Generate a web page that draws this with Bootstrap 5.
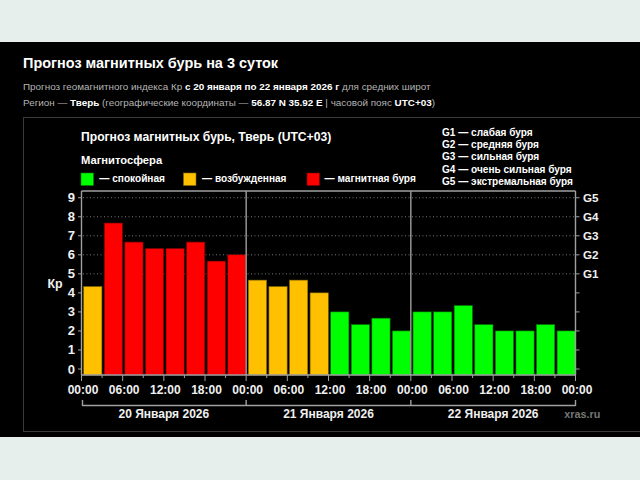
<!DOCTYPE html>
<html lang="ru">
<head>
<meta charset="utf-8">
<title>Прогноз магнитных бурь</title>
<link href="https://cdn.jsdelivr.net/npm/bootstrap@5.3.0/dist/css/bootstrap.min.css" rel="stylesheet">
<style>
html,body{height:480px;overflow:hidden}
body{background:#e6efeb;font-family:"Liberation Sans",Arial,sans-serif;padding-top:42px}
.storm-panel{background:#000;height:395px;padding:11px 0 6px 23px;color:#fff}
.storm-title{font-size:14.45px;line-height:20px;font-weight:700;margin:0 0 6px}
.storm-text{font-size:9.9px;line-height:16px;margin:0;color:#b5b5b5}
.storm-text b{color:#fff}
.storm-frame{border:1px solid #3a3a3a;border-right:0;margin-top:6px;height:315px}
.storm-frame svg{display:block;font-family:"Liberation Sans",Arial,sans-serif;font-weight:700}
</style>
</head>
<body>
<main class="storm-panel">
<h1 class="storm-title">Прогноз магнитных бурь на 3 суток</h1>
<p class="storm-text">Прогноз геомагнитного индекса Кр <b>с 20 января по 22 января 2026 г</b> для средних широт</p>
<p class="storm-text">Регион — <b>Тверь</b> (географические координаты — <b>56.87 N 35.92 E</b> | часовой пояс <b>UTC+03</b>)</p>
<div class="storm-frame"><svg id="chart" width="616" height="313" viewBox="24 118 616 313"></svg></div>
</main>
<script>
var s='',c={r:'#ff0000',y:'#ffc000',g:'#00ff00'},e={r:'#7a0000',y:'#8a6a00',g:'#008000'};
function T(x,y,t,sz,col,a){s+='<text x="'+x+'" y="'+y+'" font-size="'+sz+'" fill="'+(col||'#fff')+'"'+(a?' text-anchor="'+a+'"':'')+'>'+t+'</text>';}
function L(a,b,d,f,w,x){s+='<line x1="'+a+'" y1="'+b+'" x2="'+d+'" y2="'+f+'" stroke="'+(x||'#a0a0a0')+'" stroke-width="'+(w||1)+'"/>';}
function R(x,y,w,h,k){s+='<rect x="'+x+'" y="'+y+'" width="'+w+'" height="'+h+'" fill="'+c[k]+'" stroke="'+e[k]+'" stroke-width=".6"/>';}
var X0=81.5,X1=575.5,Yt=191,Yb=375,step=(X1-X0)/24,y0=369,u=19.03;
T(81,141,'Прогноз магнитных бурь, Тверь (UTC+03)',12.15);
T(81,164,'Магнитосфера',11.2);
var leg=[[81,'g','— спокойная',99.3],[183.5,'y','— возбужденная',202],[307,'r','— магнитная буря',324.6]];
leg.forEach(function(l){R(l[0],173,12.5,12.5,l[1]);T(l[3],182,l[2],10.1);});
['G1 — слабая буря','G2 — средняя буря','G3 — сильная буря','G4 — очень сильная буря','G5 — экстремальная буря'].forEach(function(t,i){T(442,136+i*12.2,t,10.07);});
for(var v=5;v<=9;v++){var yy=y0-v*u;s+='<line x1="83" y1="'+yy+'" x2="575" y2="'+yy+'" stroke="#777" stroke-width="1" stroke-dasharray="1 2.5"/>';}
var d=[4.33,7.67,6.67,6.33,6.33,6.67,5.67,6,4.67,4.33,4.67,4,3,2.33,2.67,2,3,3,3.33,2.33,2,2,2.33,2];
d.forEach(function(v,i){var k=v>=5?'r':v>=4?'y':'g',yy=y0-v*u;R(X0+i*step+2.2,yy,step-2.4,Yb-yy,k);});
var A=1.4;
L(X0,Yt,X1,Yt,A);L(X0,Yt,X0,Yb,A);L(X1,Yt,X1,Yb,A);L(X0,Yb,X1,Yb,A);
L(X0+8*step,Yt,X0+8*step,Yb,A);L(X0+16*step,Yt,X0+16*step,Yb,A);
for(v=0;v<=9;v++){yy=y0-v*u;L(78,yy,X0,yy);L(X1,yy,X1+4,yy);T(75,yy+4.5,v,13,'#f0f0f0','end');}
['G1','G2','G3','G4','G5'].forEach(function(g,i){T(583,y0-(i+5)*u+4.5,g,11.7,'#f0f0f0');});
T(47.5,288,'Кр',12.4,'#f0f0f0');
for(var i=0;i<=24;i++){var x=X0+i*step;L(x,Yb,x,Yb+(i%2?3:6));}
var lb=['00:00','06:00','12:00','18:00'];
for(i=0;i<=12;i++){x=X0+i*2*step;T(x+1.5,393.5,lb[i%4],12,'#f0f0f0','middle');}
L(X0+1,405.5,X1,405.5,A);
[0,8,16,24].forEach(function(n){x=X0+n*step+(n?0:1);L(x,400,x,406,A);});
['20','21','22'].forEach(function(n,i){T(X0+(i*8+4)*step,418,n+' Января 2026',12,'#f0f0f0','middle');});
T(564.3,418,'xras.ru',10.8,'#777');
document.getElementById('chart').innerHTML=s;
</script>
<script src="https://cdn.jsdelivr.net/npm/bootstrap@5.3.0/dist/js/bootstrap.bundle.min.js"></script>
</body>
</html>
